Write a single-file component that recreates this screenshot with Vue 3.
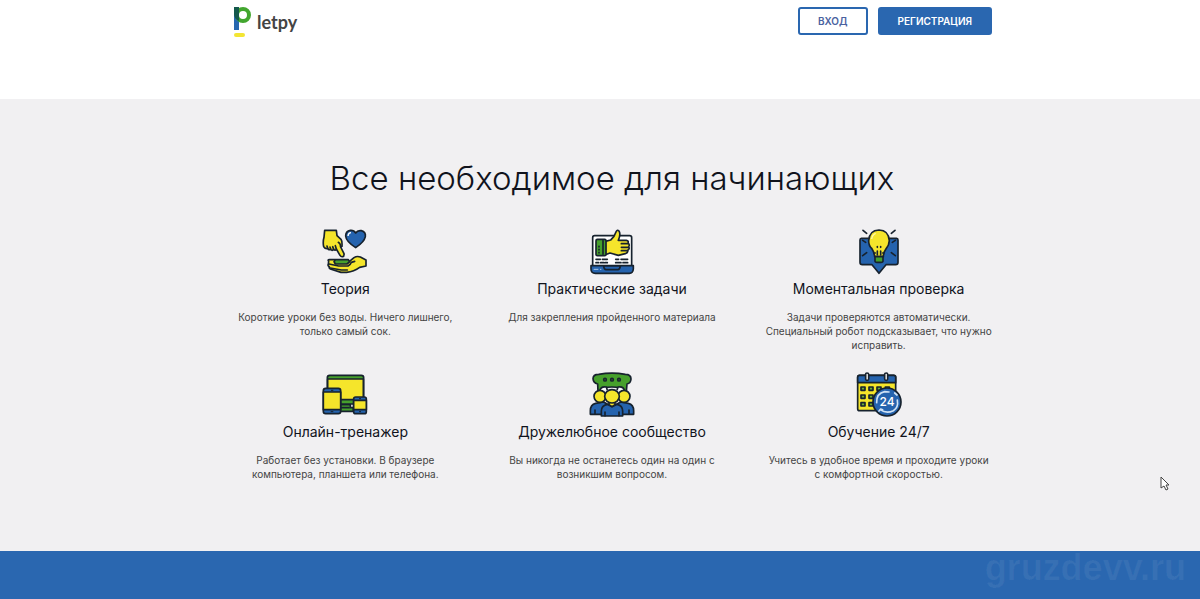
<script setup>
const features = [
  {
    icon: 'theory',
    box: '36 27 138 138',
    title: 'Теория',
    text: 'Короткие уроки без воды. Ничего лишнего, только самый сок.'
  },
  {
    icon: 'practice',
    box: '33 27 138 138',
    title: 'Практические задачи',
    text: 'Для закрепления пройденного материала'
  },
  {
    icon: 'check',
    box: '33 27 138 138',
    title: 'Моментальная проверка',
    text: 'Задачи проверяются автоматически. Специальный робот подсказывает, что нужно исправить.'
  },
  {
    icon: 'online',
    box: '36 21 138 138',
    title: 'Онлайн-тренажер',
    text: 'Работает без установки. В браузере компьютера, планшета или телефона.'
  },
  {
    icon: 'community',
    box: '33 21 138 138',
    title: 'Дружелюбное сообщество',
    text: 'Вы никогда не останетесь один на один с возникшим вопросом.'
  },
  {
    icon: 'always',
    box: '33 21 138 138',
    title: 'Обучение 24/7',
    text: 'Учитесь в удобное время и проходите уроки с комфортной скоростью.'
  }
]
</script>

<template>
  <div class="page">
    <header class="header">
      <div class="container header__row">
        <a class="logo" href="#">
          <svg class="logo__mark" viewBox="0 0 20 32" aria-hidden="true">
            <rect x="2" y="1" width="5" height="23" fill="#2768b0" />
            <circle cx="11" cy="9" r="6" fill="none" stroke="#42a62e" stroke-width="4" />
            <path d="M2 1H7V15Q2 13 2 8Z" fill="#14584c" />
            <rect x="2" y="27" width="11" height="4" rx="2" fill="#f3e533" />
          </svg>
          <span class="logo__text">letpy</span>
        </a>
        <nav class="actions">
          <button class="btn" type="button">ВХОД</button>
          <button class="btn btn--primary" type="button">РЕГИСТРАЦИЯ</button>
        </nav>
      </div>
    </header>

    <main class="features">
      <div class="container">
        <h2 class="features__title">Все необходимое для начинающих</h2>
        <div class="grid">
          <section v-for="item in features" :key="item.icon" class="card">
            <svg class="card__icon" :viewBox="item.box" aria-hidden="true">
              <!-- руки и сердце -->
              <g v-if="item.icon === 'theory'">
                <path class="y" d="M44 31H79L81 47L93 58Q97 63 96 79L92 81L102 101Q103 109 98 110Q93 111 90 106L79 87Q76 94 71 88Q66 95 62 87Q56 92 53 85Q45 88 41 80Q38 66 42 52Z" />
                <path class="n" d="M79 87L76 77M71 88L68 80M62 87L60 81M53 85L51 78M92 81Q92 71 85 67" />
                <path class="b" d="M137 83Q108 64 107 48Q107 33 121 31Q132 30 137 39Q143 30 154 32Q168 36 166 50Q163 66 137 83Z" />
                <path d="M114 48Q115 38 123 38" fill="none" stroke="#fff" stroke-width="4" />
                <path class="y" d="M56 124Q52 119 58 119H75Q81 131 114 128L132 113Q141 107 151 111L168 120V138L149 142Q132 155 110 157H93L61 147Q56 145 58 140Q52 137 55 132Z" />
                <path class="g" d="M76 119H115L119 125L111 132H76L72 125Z" />
                <path class="n" d="M57 132L86 138H114Q122 134 124 127L134 124M61 144L94 150H112" />
              </g>
              <!-- ноутбук с пальцем вверх -->
              <g v-else-if="item.icon === 'practice'">
                <rect class="w" x="44" y="47" width="117" height="94" rx="6" />
                <path class="n" d="M54 118H67M73 118H88M54 128H62M68 128H78M82 128H88M113 118H122M129 118H149M113 128H129M135 128H149" />
                <path class="y" d="M82 64L98 60Q110 50 115 34Q118 28 123 33Q129 42 121 61H145Q153 62 150 70Q156 73 152 81Q156 86 149 91Q151 98 142 101L121 106L96 99L82 104Z" />
                <path class="n" d="M130 71H149M130 82H151M130 92H148" />
                <rect class="g" x="54" y="58" width="30" height="49" rx="4" />
                <path class="n" d="M75 62V103M63 79V81M63 88V90M63 97V99" />
                <path class="b" d="M39 137H166V147Q165 160 154 160H52Q39 160 39 147Z" />
                <path class="b" d="M77 138H127Q125 149 120 149H84Q78 149 77 138Z" />
                <path d="M47 148H61M66 148H70" fill="none" stroke="#a9c6e7" stroke-width="3" />
              </g>
              <!-- лампочка -->
              <g v-else-if="item.icon === 'check'">
                <path class="b" d="M49 55H155Q159 55 159 60V127Q159 134 152 134H123L102 160L81 134H52Q45 134 45 127V60Q45 55 49 55Z" />
                <path class="n" d="M54 31L65 40M150 31L139 40M53 107L65 98M151 107L139 98M53 61L62 67M151 61L142 67" />
                <path class="y" d="M89 110Q88 97 80 85Q71 77 71 62Q73 31 102 30Q131 31 133 62Q132 77 124 85Q115 97 115 110Z" />
                <path d="M80 57Q82 44 92 40" fill="none" stroke="#fff9a8" stroke-width="4" />
                <path class="n" d="M97 80V82M107 80V82M97 93V105M107 93V105M89 99H91M113 99H115" />
                <path class="g" d="M90 110H114V123Q114 127 108 127H96Q90 127 90 123Z" />
              </g>
              <!-- планшет, монитор, телефон -->
              <g v-else-if="item.icon === 'online'">
                <path class="g" d="M89 119H121V128H130V139H88Z" />
                <path class="n" d="M91 128H117" />
                <rect class="g" x="52" y="31" width="109" height="86" rx="7" />
                <path class="y" d="M53 42H160V104H53Z" />
                <rect class="b" x="40" y="70" width="52" height="76" rx="7" />
                <path class="y" d="M40 81H92V134H40Z" />
                <rect class="b" x="131" y="96" width="38" height="50" rx="6" />
                <path class="y" d="M131 106H169V134H131Z" />
                <path d="M63 76H70M62 140H70M147 101H153M147 140H153" fill="none" stroke="#17222e" stroke-width="3" />
              </g>
              <!-- люди -->
              <g v-else-if="item.icon === 'community'">
                <path class="g" d="M45 41Q45 28 62 28Q102 21 142 28Q159 28 159 42Q158 55 147 57L145 80L129 70Q101 62 76 70L60 80L59 57Q46 54 45 41Z" />
                <circle class="g" cx="81" cy="44" r="4" />
                <circle class="g" cx="102" cy="44" r="4" />
                <circle class="g" cx="123" cy="44" r="4" />
                <path class="w" d="M66 76Q69 63 85 66L88 76M117 76L120 66Q136 63 139 76" />
                <path class="b" d="M37 148V137Q37 119 53 115L77 111L91 119V148Z" />
                <path class="b" d="M113 148V119L128 111L151 115Q167 119 167 137V148Z" />
                <circle class="y" cx="66" cy="94" r="18" />
                <circle class="y" cx="138" cy="94" r="18" />
                <path class="b" d="M70 153V138Q70 122 88 118L102 125L117 118Q134 122 134 138V153Z" />
                <path class="y" d="M93 108H111V119L102 125L93 119Z" />
                <ellipse class="y" cx="102" cy="94" rx="22" ry="20" />
                <path class="n" d="M51 147V135M153 147V135M81 152V141M123 152V141" />
              </g>
              <!-- календарь 24/7 -->
              <g v-else>
                <rect class="y" x="38" y="31" width="114" height="106" rx="6" />
                <path class="b" d="M38 53V37Q38 31 44 31H146Q152 31 152 37V53Z" />
                <path class="w" d="M62 27Q62 24 66 24Q71 24 71 28V42Q71 46 66 46Q62 46 62 42ZM119 27Q119 24 124 24Q128 24 128 28V42Q128 46 124 46Q119 46 119 42Z" />
                <g class="cells">
                  <rect x="48" y="66" width="12" height="10" />
                  <rect x="72" y="66" width="12" height="10" />
                  <rect x="96" y="66" width="12" height="10" />
                  <rect x="121" y="66" width="12" height="10" />
                  <rect x="48" y="90" width="12" height="10" />
                  <rect x="72" y="90" width="12" height="10" />
                  <rect x="48" y="113" width="12" height="10" />
                  <rect x="72" y="113" width="12" height="10" />
                </g>
                <circle class="b" cx="126" cy="111" r="42" />
                <path d="M95 113Q94 85 119 80L132 81M157 105Q161 128 145 137Q124 147 106 134M156 90L149 84M102 138L107 132L113 134" fill="none" stroke="#cfe2f5" stroke-width="5" stroke-linecap="round" />
                <text x="126" y="123" text-anchor="middle" class="hours">24</text>
              </g>
            </svg>
            <h3 class="card__title">{{ item.title }}</h3>
            <p class="card__text">{{ item.text }}</p>
          </section>
        </div>
      </div>
    </main>

    <footer class="footer">
      <span class="watermark">gruzdevv.ru</span>
    </footer>

    <svg class="cursor" viewBox="0 0 10 15" aria-hidden="true">
      <path d="M1 1V12L4 10L6 14L8 13L6 9H9Z" fill="#fff" stroke="#444" stroke-width="1" />
    </svg>
  </div>
</template>

<style>
body {
  margin: 0;
}
</style>

<style scoped>
.page {
  position: relative;
  display: flex;
  flex-direction: column;
  min-height: 100vh;
  background: #fff;
  color: #10131c;
  font-family: Inter, "Liberation Sans", sans-serif;
}

.container {
  box-sizing: border-box;
  max-width: 824px;
  margin: 0 auto;
  padding-left: 24px;
}

.header {
  height: 99px;
}

.header__row {
  display: flex;
  justify-content: space-between;
  align-items: flex-start;
  padding: 6px 20px 0 44px;
}

.logo {
  display: flex;
  align-items: center;
  gap: 5px;
  color: #444;
  text-decoration: none;
}

.logo__mark {
  width: 20px;
  height: 32px;
}

.logo__text {
  font-family: Lato, sans-serif;
  font-size: 18px;
  font-weight: 700;
  line-height: 24px;
}

.actions {
  display: flex;
  gap: 10px;
  padding-top: 1px;
}

.btn {
  box-sizing: border-box;
  height: 28px;
  padding: 0 18px;
  border: 2px solid #2a67b0;
  border-radius: 3px;
  background: #fff;
  color: #4a62a0;
  font-family: inherit;
  font-size: 10px;
  font-weight: 600;
  cursor: pointer;
}

.btn--primary {
  background: #2a67b0;
  color: #fff;
}

/* блок с преимуществами */
.features {
  padding: 55px 0 70px;
  background: #f1f0f2;
}

.features__title {
  margin: 0 0 27px;
  font-size: 33px;
  font-weight: 350;
  line-height: 48px;
  text-align: center;
}

.grid {
  display: grid;
  grid-template-columns: repeat(3, 1fr);
  row-gap: 20px;
}

.card {
  padding: 0 20px;
  text-align: center;
}

.card__icon {
  display: block;
  width: 46px;
  height: 46px;
  margin: 0 auto 4px;
}

.card__icon * {
  stroke-linejoin: round;
}

.y, .b, .g, .w, .n, .cells {
  stroke: #17222e;
  stroke-width: 5;
}

.y { fill: #f5e52b; }
.b { fill: #2563ae; }
.g { fill: #46a02c; }
.w { fill: #fff; }
.n { fill: none; stroke-linecap: round; }
.cells { fill: #6cae35; }

.hours {
  fill: #fff;
  font-size: 36px;
  font-weight: 500;
}

.card__title {
  margin: 0 0 11px;
  font-size: 14px;
  font-weight: 400;
  line-height: 20px;
}

.card__text {
  margin: 0;
  color: #444;
  font-size: 10px;
  line-height: 14px;
}

.footer {
  display: flex;
  flex: 1;
  justify-content: flex-end;
  padding: 0 14px;
  background: #2a67b0;
}

.watermark {
  color: rgba(255, 255, 255, 0.06);
  font-family: "Liberation Sans", Arial, sans-serif;
  font-size: 36px;
  font-weight: 700;
  line-height: 34px;
}

.cursor {
  position: absolute;
  top: 476px;
  right: 30px;
  width: 10px;
  height: 15px;
}
</style>
